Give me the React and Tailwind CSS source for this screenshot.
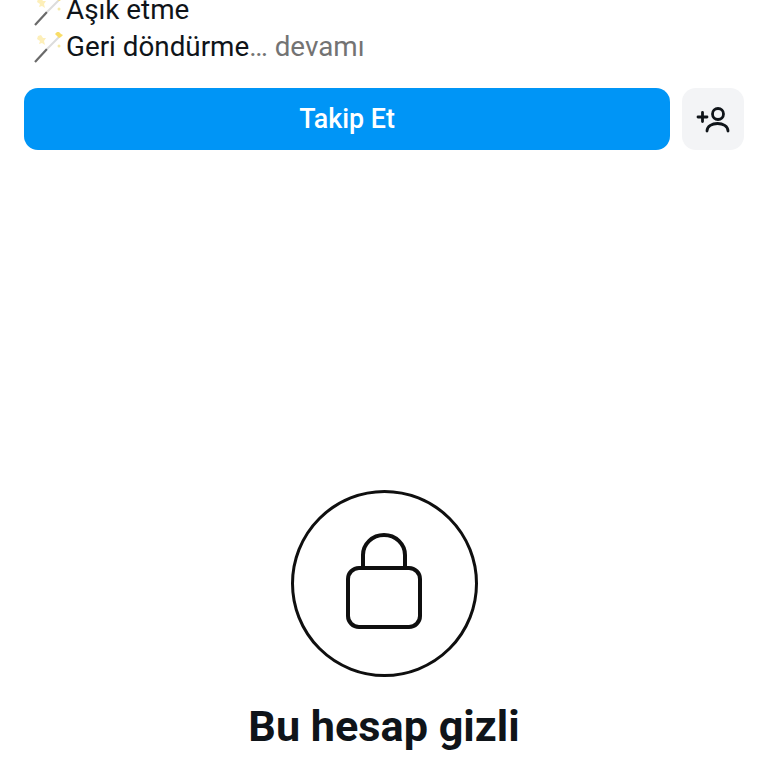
import React from "react";

const Wand = () => (
  <svg width="32" height="32" viewBox="0 0 32 32" fill="none" className="shrink-0">
    <path d="M2 31 L14 18" stroke="#6a6a6a" strokeWidth="2.2" />
    <path d="M14 18 L27 5" stroke="#dcdcdc" strokeWidth="2" />
    <path d="M5 5 L8 4 L10 7 L13 7 L11 10 L12 14 L9 12 L6 13 L7 10 L4 8 Z" fill="#fbe58a" opacity="0.6" />
    <path d="M24 1 L26 1 L28 3 L30 4 L28 6 L26 7 L24 5 L22 3 Z" fill="#f9dd68" />
    <circle cx="26" cy="15" r="1.5" fill="#f5e9a8" />
  </svg>
);

const Line = ({ children }) => (
  <div className="flex h-[37px] items-center pl-[33px] text-[27.8px] text-[#0f1419]">
    <Wand />
    <span className="ml-px whitespace-nowrap">{children}</span>
  </div>
);

const App = () => {
  return (
    <div className="h-[768px] w-[768px] overflow-hidden bg-white font-['Roboto',sans-serif]">
      <div className="-mt-[9px]">
        <Line>Aşık etme</Line>
        <Line>
          Geri döndürme<span className="text-[#737373]">… devamı</span>
        </Line>
      </div>
      <div className="mt-[23px] flex gap-3 px-6">
        <button className="h-[62px] flex-1 rounded-[14px] bg-[#0095f6] text-[26.8px] font-medium text-white">
          Takip Et
        </button>
        <button className="flex h-[62px] w-[62px] items-center justify-center rounded-[14px] bg-[#f3f4f6]">
          <svg width="36" height="32" viewBox="0 0 36 32" fill="none" stroke="#0f1419" strokeWidth="2.8" strokeLinecap="round">
            <path d="M3 14 H12 M7.5 9.5 V18.5" />
            <circle cx="23" cy="11" r="5.5" />
            <path d="M12 28 C12 18 33 18 33 28" />
          </svg>
        </button>
      </div>
      <div className="mt-[340px] flex flex-col items-center">
        <div className="flex h-[187px] w-[187px] items-center justify-center rounded-full border-[3.5px] border-[#0f0f0f]">
          <svg width="76" height="98" viewBox="0 0 76 98" fill="none" stroke="#0f0f0f" strokeWidth="4" className="mt-[-4px]">
            <path d="M17 35 V22 a21 20 0 0 1 42 0 V35" />
            <rect x="2" y="35" width="72" height="59" rx="11" />
          </svg>
        </div>
        <div className="mt-[25px] text-[43.2px] leading-[50px] font-bold text-[#0f1419]">Bu hesap gizli</div>
      </div>
    </div>
  );
};

export default App;
